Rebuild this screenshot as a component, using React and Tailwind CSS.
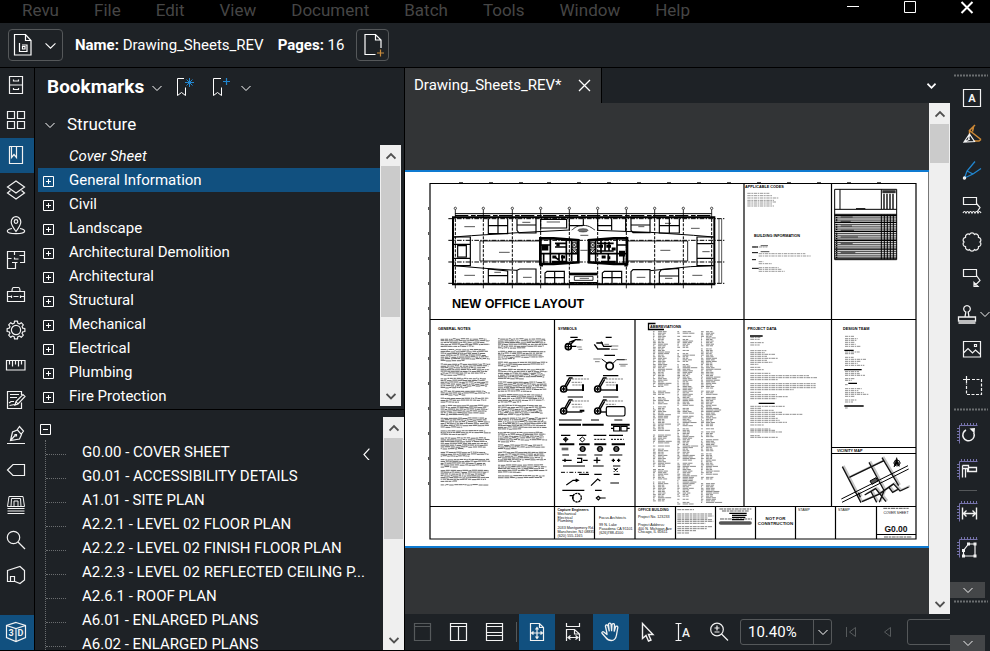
import React from "react";

/* ---------- shared helpers ---------- */

function Icon({ children, size = 24, className = "" }) {
  return (
    <svg
      width={size}
      height={size}
      viewBox="0 0 24 24"
      fill="none"
      stroke="currentColor"
      strokeWidth="1.2"
      aria-hidden="true"
      className={"shrink-0 " + className}
    >
      {children}
    </svg>
  );
}

function Chevron({ dir = "down", w = 10, strong = false, className = "" }) {
  const d = {
    down: "M0.5 1l4.5 4.5L9.5 1",
    up: "M0.5 5.5L5 1l4.5 4.5",
    left: "M7 -1.5L2.5 3.5L7 8.5",
  }[dir];
  return (
    <svg
      width={w}
      height={w}
      viewBox="0 -2 10 10"
      fill="none"
      stroke="currentColor"
      strokeWidth={strong ? 1.9 : 1}
      aria-hidden="true"
      className={"shrink-0 " + className}
    >
      <path d={d} />
    </svg>
  );
}

function polar(cx, cy, r, a) {
  return (cx + r * Math.cos(a)).toFixed(2) + " " + (cy + r * Math.sin(a)).toFixed(2);
}

function gearPath() {
  let d = "";
  for (let i = 0; i < 8; i++) {
    const a = (i * Math.PI) / 4;
    const pts = [
      [7, -0.26],
      [9, -0.17],
      [9, 0.17],
      [7, 0.26],
    ];
    pts.forEach(([r, o], k) => {
      d += (i === 0 && k === 0 ? "M" : "L") + polar(12, 12, r, a + o);
    });
  }
  return d + "Z";
}

function scallopPath() {
  let d = "M" + polar(12, 12, 8, 0);
  for (let i = 1; i <= 10; i++) {
    d += "A2.7 2.7 0 0 1 " + polar(12, 12, 8, (i * Math.PI) / 5);
  }
  return d + "Z";
}

function ScrollBar({ thumb, className = "" }) {
  return (
    <div className={"flex w-[21px] shrink-0 flex-col items-center bg-[#efefef] text-[#505050] " + className}>
      <button type="button" aria-label="Scroll up" className="flex h-[21px] w-full shrink-0 items-center justify-center">
        <Chevron dir="up" strong />
      </button>
      <div className="flex w-full flex-1 flex-col px-px">
        <div className={"bg-[#cbcbcb] " + thumb} />
      </div>
      <button type="button" aria-label="Scroll down" className="flex h-[21px] w-full shrink-0 items-center justify-center">
        <Chevron dir="down" strong />
      </button>
    </div>
  );
}

/* ---------- menu and toolbar ---------- */

const menus = ["Revu", "File", "Edit", "View", "Document", "Batch", "Tools", "Window", "Help"];

function MenuBar() {
  return (
    <header className="flex h-[23px] shrink-0 items-start justify-between bg-black">
      <nav className="flex gap-[35px] pl-[22px] text-[17px] leading-[21px] text-[#464646]">
        {menus.map((m) => (
          <button key={m} type="button">
            {m}
          </button>
        ))}
      </nav>
      <div className="flex gap-[30px] pr-[10px] text-white">
        <button type="button" aria-label="Minimize" className="flex w-[27px] justify-center">
          <svg width="14" height="15" fill="none" stroke="currentColor">
            <path d="M1 6.5h12" />
          </svg>
        </button>
        <button type="button" aria-label="Maximize" className="flex w-[27px] justify-center">
          <svg width="14" height="15" fill="none" stroke="currentColor">
            <path d="M1.5 1.5h11v11h-11z" />
          </svg>
        </button>
        <button type="button" aria-label="Close" className="flex w-[27px] justify-center">
          <svg width="14" height="15" fill="none" stroke="currentColor" strokeWidth="2">
            <path d="M1.5 2l11 11M12.5 2l-11 11" />
          </svg>
        </button>
      </div>
    </header>
  );
}

function ToolBar() {
  return (
    <div className="flex h-[45px] shrink-0 items-center border-b border-black pl-2 text-[15px] text-white">
      <button type="button" aria-label="Document" className="flex h-8 w-[55px] items-center justify-between rounded border border-[#55585a] pr-[6px] pl-[2px]">
        <Icon>
          <path d="M3.500 1.500h11l5.500 6v14.500h-16.500zM14.500 1.500v6h5.500" strokeWidth="1.200" />
          <path d="M8.500 10v8.500h7.500v-6.500h-5" strokeWidth="1.200" />
          <path d="M11.500 13.500h2.500v2.500h-2.500z" />
        </Icon>
        <Chevron w={11} />
      </button>
      <p className="ml-3">
        <strong className="font-bold">Name:</strong> Drawing_Sheets_REV
      </p>
      <p className="ml-[14px]">
        <strong className="font-bold">Pages:</strong> 16
      </p>
      <button type="button" aria-label="Add page" className="ml-3 flex h-8 w-[33px] items-center justify-center rounded border border-[#55585a]">
        <Icon>
          <path d="M14.500 21.500h-10.500v-20h10.500l5.500 5.500v8M14.500 1.500v5.500h5.500" strokeWidth="1.200" />
          <path d="M19.500 16.500v7M16 20h7" stroke="#c98b3b" />
        </Icon>
      </button>
    </div>
  );
}

/* ---------- left rail ---------- */

const railIcons = [
  ["File Access", <path key="a" d="M5.500 3.500h13v17h-13zM5.500 12h13M9.500 6.500v1.500h5v-1.500M9.500 15v1.500h5v-1.500" />],
  ["Thumbnails", <path key="a" d="M3.500 3.500h7v7h-7zM13.500 3.500h7v7h-7zM3.500 13.500h7v7h-7zM13.500 13.500h7v7h-7z" />],
  ["Bookmarks", <path key="a" d="M5.500 3.500h13v17h-13zM7.500 3.500v11l2.500-3 2.500 3v-11" />],
  ["Layers", <path key="a" d="M12 3l8.500 6-8.500 6-8.500-6zM6.500 12.500l-3 2.500 8.500 6 8.500-6-3-2.500" />],
  [
    "Places",
    <g key="a">
      <path d="M12 18.500c-3-4-4.800-6.500-4.800-9.500a4.800 5.300 0 0 1 9.600 0c0 3-1.800 5.500-4.800 9.500z" />
      <circle cx="12" cy="8.500" r="1.800" />
      <path d="M8 15.500c-3 .6-4.700 1.600-4.700 2.500 0 1.700 3.800 2.700 8.700 2.700s8.700-1 8.700-2.700c0-.9-1.700-1.900-4.700-2.500" />
    </g>,
  ],
  ["Spaces", <path key="a" d="M11.500 14.500v6h-8v-17h17v11h-4.500M13.500 14.500h-2M10.500 3.500v3.500M3.500 10.500h4M10.500 9.500v1.500h4M15.500 7.500h5M8 14.500h3.500" />],
  ["Tool Chest", <path key="a" d="M3.500 8.500h17v10h-17zM8 8.500c0-3 .5-4 1.500-4h5c1 0 1.500 1 1.500 4M3.500 13.500h4M9.500 13.500h5M16.500 13.500h4M7.500 12.500v2.500M16.500 12.500v2.500" />],
  [
    "Properties",
    <g key="a">
      <path d={gearPath()} strokeLinejoin="round" />
      <circle cx="12" cy="12" r="4.600" />
    </g>,
  ],
  ["Measurements", <path key="a" d="M2.500 7.500h18.500v9.500h-18.500zM5.500 7.500v4M8.500 7.500v6M11.500 7.500v4M14.500 7.500v6M17.500 7.500v4" />],
  ["Forms", <path key="a" d="M17.500 7v-3.500h-14v17h14v-6M6 6.500h9M6 9.500h7M5 15l2-1.500h3M5.500 17.500l5-1M11 17l1-3.500 7-7 2 2-7 7.500zM12 13.500l2 2.500" />],
  ["Signatures", <path key="a" d="M3 20.500h18M6.500 17.500l2-8.500 5-2 4 4.500-2 4.500zM13 7l2.500-3.500 4 4.500-2.500 3.500M6.500 17.500l4.500-5M11 11.500h1.500v1.500h-1.500z" />],
  ["Tags", <path key="a" d="M9 6.500h11.500v11h-11.500l-5.500-5.500z" />],
  ["Batch", <path key="a" d="M3.500 13.500l1.500-10h14l1.500 10zM7 13.500l.5-8h9l.5 8M10 13v-5h4v5M3.500 15.500h17M3.500 18h17M3.500 20.500h17" strokeWidth="1" />],
  [
    "Search",
    <g key="a">
      <circle cx="9.500" cy="9.500" r="6.200" />
      <path d="M14 14l7 7" />
    </g>,
  ],
  ["Sets", <path key="a" d="M3.500 7.500l12.500-4 4.500 4v9.500l-4.500 3.500-5-2h-7.500zM6.500 18v-4.500h4v5" />],
];

function LeftRail() {
  return (
    <nav className="flex w-[35px] shrink-0 flex-col border-r border-black text-[#f2f2f2]" aria-label="Panels">
      {railIcons.map(([label, art]) => (
        <button
          key={label}
          type="button"
          aria-label={label}
          className={"flex h-[35px] items-start pt-[5px] pl-1 " + (label === "Bookmarks" ? "bg-[#11507f]" : "")}
        >
          <Icon>{art}</Icon>
        </button>
      ))}
      <button type="button" aria-label="3D Model Tree" className="mt-auto flex h-[35px] items-start bg-[#11507f] pt-[5px] pl-1">
        <Icon>
          <path d="M12 2.500l9.500 3v12l-9.500 4-9.500-4v-12zM2.500 5.500l9.500 3 9.500-3M12 8.500v13" />
          <text x="4.500" y="16" fontSize="9" fontWeight="700" fill="currentColor" stroke="none">3</text>
          <text x="13.500" y="16" fontSize="9" fontWeight="700" fill="currentColor" stroke="none">D</text>
        </Icon>
      </button>
    </nav>
  );
}

/* ---------- bookmarks panel ---------- */

const sections = [
  "General Information",
  "Civil",
  "Landscape",
  "Architectural Demolition",
  "Architectural",
  "Structural",
  "Mechanical",
  "Electrical",
  "Plumbing",
  "Fire Protection",
];

const sheets = [
  "G0.00 - COVER SHEET",
  "G0.01 - ACCESSIBILITY DETAILS",
  "A1.01 - SITE PLAN",
  "A2.2.1 - LEVEL 02 FLOOR PLAN",
  "A2.2.2 - LEVEL 02 FINISH FLOOR PLAN",
  "A2.2.3 - LEVEL 02 REFLECTED CEILING P...",
  "A2.6.1 - ROOF PLAN",
  "A6.01 - ENLARGED PLANS",
  "A6.02 - ENLARGED PLANS",
];

function TreeBox({ open = false }) {
  return (
    <svg width="11" height="11" fill="none" stroke="white" className="shrink-0" aria-hidden="true">
      <path d={open ? "M.5.5h10v10H.5zM3 5.500h5" : "M.5.5h10v10H.5zM3 5.500h5M5.500 3v5"} />
    </svg>
  );
}

function BookmarksPanel() {
  return (
    <aside className="flex w-[370px] shrink-0 flex-col border-r border-black text-white">
      <div className="flex h-[39px] shrink-0 items-center pl-3">
        <h2 className="text-[19px] font-bold">Bookmarks</h2>
        <button type="button" aria-label="Panel menu" className="ml-2">
          <Chevron />
        </button>
        <button type="button" aria-label="Create bookmarks" className="ml-[11px]">
          <Icon>
            <path d="M11 2.500h-6.500v17l4-3 4 3v-8" strokeWidth="1" />
            <path d="M16.500 2v9M12 6.500h9M13.500 3.500l6 6M19.500 3.500l-6 6" stroke="#2186cf" strokeWidth="1" />
          </Icon>
        </button>
        <button type="button" aria-label="Add bookmark" className="ml-3">
          <Icon>
            <path d="M12 2.500h-7.500v17l4-3 4 3v-8" strokeWidth="1" />
            <path d="M17.500 2v7M14 5.500h7" stroke="#2186cf" />
          </Icon>
        </button>
        <button type="button" aria-label="More" className="ml-2">
          <Chevron />
        </button>
      </div>
      <button type="button" className="flex h-9 shrink-0 items-center gap-3 pl-[10px] text-left text-[17px]">
        <Chevron />
        Structure
      </button>
      <div className="mt-px flex h-[266px] shrink-0 border-b border-black pr-[3px] pb-[3px]">
        <ul className="flex-1 overflow-hidden pl-[3px] text-[15px] leading-[24px]">
          <li className="pl-[31px] italic">
            <a href="#cover">Cover Sheet</a>
          </li>
          {sections.map((s, i) => (
            <li key={s} className={"flex items-center gap-[15px] pl-[5px] " + (i === 0 ? "bg-[#11507f]" : "")}>
              <button type="button" aria-label={"Expand " + s} className="pt-[2px]">
                <TreeBox />
              </button>
              <a href="#section">{s}</a>
            </li>
          ))}
        </ul>
        <ScrollBar thumb="h-[151px]" className="mt-px" />
      </div>
      <div className="flex min-h-0 flex-1 pt-[7px]">
        <div className="flex min-w-0 flex-1 flex-col overflow-hidden">
          <button type="button" aria-label="Collapse" className="flex h-[23px] shrink-0 items-end pb-[5px] pl-[5px]">
            <TreeBox open />
          </button>
          <ul className="ml-[10px] border-l border-dotted border-[#6a6d6f] text-[15px] leading-[24px]">
            {sheets.map((s, i) => (
              <li key={s} className="flex items-center whitespace-nowrap">
                <span className="mt-1 w-[20px] shrink-0 border-t border-dotted border-[#6a6d6f]" />
                <a href="#sheet" className="ml-4 w-[287px]">
                  {s}
                </a>
                {i === 0 && <Chevron dir="left" w={12} className="-ml-2 mt-1" />}
              </li>
            ))}
          </ul>
        </div>
        <ScrollBar thumb="h-[101px]" />
      </div>
    </aside>
  );
}

/* ---------- drawing sheet ---------- */

// Deterministic run of short dashes standing for body copy too small to read.
function greek(seed, x, w, y0, y1, step) {
  let s = seed;
  const rnd = () => {
    s = (s * 1103515245 + 12345) % 2147483648;
    return s / 2147483648;
  };
  let d = "";
  let left = 3 + Math.floor(rnd() * 4);
  for (let y = y0; y < y1; y += step) {
    left -= 1;
    if (left < 0) {
      left = 3 + Math.floor(rnd() * 5);
      continue;
    }
    const end = x + w * (left === 0 ? 0.3 + rnd() * 0.4 : 0.88 + rnd() * 0.12);
    let cx = x;
    while (cx < end) {
      const len = Math.min(3 + rnd() * 14, end - cx);
      const lift = (rnd() - 0.5) * 1.8;
      d += "M" + cx.toFixed(1) + " " + (y + lift).toFixed(1) + "h" + len.toFixed(1);
      cx += len + 0.6 + rnd() * 1.8;
    }
  }
  return d;
}

function abbreviations(seed, x, tx, w, y0, y1) {
  let s = seed;
  const rnd = () => {
    s = (s * 1103515245 + 12345) % 2147483648;
    return s / 2147483648;
  };
  let d = "";
  for (let y = y0; y < y1; y += 4.7) {
    if (rnd() < 0.1) continue;
    d += "M" + x + " " + y.toFixed(1) + "h" + (3 + rnd() * 6).toFixed(1);
    const len = w * (0.3 + rnd() * rnd() * 0.7);
    d += "M" + tx + " " + y.toFixed(1) + "h" + (len * 0.5).toFixed(1) + "m2 0h" + (len * 0.45).toFixed(1);
  }
  return d;
}

// Short left-aligned lines: [y, width, indent] rows.
function lines(x, rows) {
  return rows.map(([y, w, o = 0]) => "M" + (x + o) + " " + y + "h" + w).join("");
}

const cols = [91, 175, 262, 347, 433, 518, 604, 689, 775, 860];

function OfficePlan() {
  return (
    <g transform="translate(425 175) scale(.33333)" fill="none" stroke="#000">
      <path d="M84 127h784v201H84z" strokeWidth="6" />
      <path d="M90 116h770" strokeWidth="3" />
      <path d="M90 122h770" strokeWidth="3.500" strokeDasharray="40 8 14 4" />
      {cols.map((x) => (
        <g key={x}>
          <path d={"M" + x + " 104v26M" + x + " 328v12"} strokeWidth="2.500" />
          <path d={"M" + x + " 132v196"} strokeWidth="3" strokeDasharray="9 4" />
          <circle cx={x} cy="100" r="3.500" strokeWidth="2" />
        </g>
      ))}
      <path d="M70 131h830M70 196h830M70 261h830M70 325h830" strokeWidth="3" strokeDasharray="14 4 4 4" />
      <path d="M882 131v194M890 131v194" strokeWidth="2" />
      {/* perimeter rooms */}
      <path
        strokeWidth="3.500"
        d="M190 130v46h58v-46M219 130v46M190 152h58M276 130v36l6 8h51v-44M276 150h57M347 133h78v26h-78zM433 130v34M475 130v22M518 130v36M560 130v36M433 152h40M518 152h42M602 130v38M618 130v36l6 7h51v-43M618 150h57M703 130v44h60v-44M733 130v44M703 152h60"
      />
      <path strokeWidth="3" d="M86 186l54-4 140-9 155-8M86 272l106 9 84 5M866 186l-60-5-130-9-160-6M866 272l-70 3-120 12" />
      <path strokeWidth="3.500" d="M86 186h50v86h-50M86 208h50M86 250h50M98 212h26v34h-26zM866 186h-50v86h50M816 206h50M816 250h50" />
      <path
        strokeWidth="3.500"
        d="M190 326v-44l58 6v38M190 302h58M276 326v-40l8-4h49v44M360 326v-32l6-5h52v37M389 289v37M360 308h58M532 326v-32l6-5h52v37M561 289v37M532 308h58M618 326v-36l6-6h51v42M703 326v-34l6-8 52-4v46M703 303h58"
      />
      <path strokeWidth="2.500" d="M165 198h182v60h-182zM606 198h182v60h-182zM448 304h56v12h-56zM440 165c6-2 12-14 34-14s30 12 36 14" />
      <path strokeWidth="8" d="M432 297h86" />
      <path strokeWidth="4" d="M432 323h86" />
      <ellipse cx="474" cy="166" rx="15" ry="5" fill="#777" strokeWidth="1.500" />
      <path
        strokeWidth="2"
        d="M118 155h32M222 232h32M118 301h32M292 142h24M365 141h40M706 226h30M798 160h26M802 301h30M832 230h22M294 307h26M635 307h26M208 292h20M466 181h24M466 226h22M640 155h18M720 145h18M720 310h22M464 310h28"
      />
      {/* service cores */}
      <path strokeWidth="8" d="M346 190h40l74 6v66l-74 5h-40zM606 190h-40l-74 6v66l74 5h40z" />
      <path
        strokeWidth="5"
        d="M346 210h30M346 236h114M376 190v76M402 236v30M424 192v72M440 198v60M390 205h34M390 216h34M356 236v28M412 240v24M388 245l16 12M606 210h-30M606 236h-114M576 190v76M550 236v30M528 192v44M512 198v66M516 205h50M516 228h50M540 200v28M552 200v28M596 236v28"
      />
      <path strokeWidth="9" d="M350 214h20M350 222h20M394 210h10M382 246h12M408 246h12M582 232h18M582 240h18M520 214h14M544 214h14M560 222h12M530 246h12M548 248h8M344 270h10M598 270h10M380 262h44M528 262h44" />
      <path strokeWidth="2.500" d="M441 203h14v14h-14zM441 222h14v14h-14zM441 203l14 14M455 203l-14 14M441 222l14 14M455 222l-14 14M496 203h14v14h-14zM496 222h14v14h-14zM496 203l14 14M510 203l-14 14M496 222l14 14M510 222l-14 14" />
    </g>
  );
}

function Symbols() {
  return (
    <g transform="translate(425 315) scale(.33333)" fill="none" stroke="#000">
      <path strokeWidth="3.500" d="M436 67h22M542 67h18M538 121h32M424 182h50M534 182h46M428 246h46M534 246h46M402 315h68M498 315h24M568 315h24M408 361h28M456 361h28M506 361h38M552 361h42M412 420h20M458 420h26M508 420h24M554 420h38M414 453h66M504 453h32M564 453h22M462 478h30M508 478h22M566 478h18M412 526h66M510 526h20" />
      <path strokeWidth="6" d="M402 329h66M472 329h64M558 329h56M404 388h44M462 388h32M508 388h36M560 388h40" />
      <circle cx="430" cy="95" r="9" strokeWidth="5" />
      <path strokeWidth="4" d="M421 95h20M430 86v20M437 88l14-14h16M432 82l16-6M440 94h14M508 88l10 14h36M528 80l8 14h24M514 84h20" />
      <path strokeWidth="2" stroke="#444" d="M456 75h18M456 96h14M460 103h12M538 88h14M558 93h22M558 103h20" />
      <circle cx="554" cy="153" r="11" strokeWidth="5" />
      <path strokeWidth="3" d="M546 144l-16-12M563 146l12-12h24" />
      <path strokeWidth="2" stroke="#444" d="M505 132h22M510 140h14M582 134h24M582 148h26M586 153h16" />
      {[
        [416, 222],
        [518, 222],
        [416, 288],
        [518, 288],
      ].map(([x, y]) => (
        <g key={x + "-" + y}>
          <circle cx={x} cy={y} r="9" strokeWidth="5" />
          <path d={"M" + (x - 6) + " " + y + "h12M" + x + " " + (y - 6) + "v12"} strokeWidth="4" />
          <path d={"M" + (x + 3) + " " + (y - 8) + "l14-25h10M" + (x + 7) + " " + (y - 5) + "l14-24"} strokeWidth="4" />
          <path d={"M" + (x + 10) + " " + (y + 3) + "h46"} strokeWidth="4" />
          <path d={"M" + (x + 24) + " " + (y - 30) + "h54M" + (x + 24) + " " + (y - 20) + "h30M" + (x + 26) + " " + (y - 12) + "h30"} strokeWidth="2" strokeDasharray="7 2" stroke="#444" />
        </g>
      ))}
      <path strokeWidth="6" d="M474 208v20M576 208v20M464 287h14" />
      <rect x="544" y="275" width="56" height="28" rx="5" strokeWidth="3.500" fill="#fff" />
      <path strokeWidth="3.500" d="M566 334h18v14h-18zM588 334h18v14h-18zM566 340h-8M606 340h8" />
      <path strokeWidth="3" d="M422 366v16M414 373h16M472 366l8 7-8 8-8-8z" />
      <circle cx="422" cy="373" r="5" strokeWidth="3" />
      <path strokeWidth="3" strokeDasharray="6 3" d="M508 373h36M558 373h38" />
      <path strokeWidth="8" stroke="#666" d="M410 402h20" />
      <g fill="#999" strokeWidth="4">
        <circle cx="473" cy="402" r="7" />
        <circle cx="525" cy="402" r="7" />
        <circle cx="574" cy="402" r="7" />
      </g>
      <path strokeWidth="2.500" d="M463 402h20M515 402h20M564 402h20" />
      <path strokeWidth="4" d="M412 436h28M420 431v10M456 430h14v12h-14M474 436h14M506 436h20M516 427v18M560 436h10M565 431v10M576 436h10M581 431v10" />
      <path strokeWidth="3" strokeDasharray="12 5 3 5" d="M408 472h82" />
      <path strokeWidth="3.500" d="M566 460l12 10M578 460l-12 10M424 510l20-14h14M452 492l8 4-8 4M498 512l20-20 8 6M556 504h26" />
      <circle cx="456" cy="548" r="13" strokeWidth="4" strokeDasharray="7 2" />
      <path strokeWidth="3.500" d="M434 542h10v12M514 549l6-5 6 5-6 6zM526 549h16" />
    </g>
  );
}

function Street({ d }) {
  return (
    <g>
      <path d={d} stroke="#c4c4c4" strokeWidth="6" transform="translate(4 -3)" />
      <path d={d} stroke="#111" strokeWidth="4" />
    </g>
  );
}

function DrawingSheet() {
  const notes = [greek(7, 47, 150, 72, 510, 5.4), greek(23, 219, 148, 72, 488, 5.4)];
  const abbr = [
    abbreviations(5, 69, 84, 50, 50, 560),
    abbreviations(11, 142, 158, 50, 50, 570),
    abbreviations(31, 213, 228, 52, 50, 565),
  ];
  return (
    <svg
      viewBox="405 172 524 374"
      className="block w-full bg-white"
      role="img"
      aria-label="Cover sheet of the drawing set"
      fontFamily='"Liberation Sans", Arial, sans-serif'
    >
      {/* sheet frame and title block */}
      <g stroke="#000" fill="none" strokeWidth="1.200">
        <path d="M430 183.500h486v355.500H430zM430 319.500h486M430 506.500h486M744 183.500v323M831.500 183.500v323M554.500 319.500v219.500M635 319.500v219.500M831.500 447.500h84.500M831.500 453.500h84.500" />
        <path d="M594.500 506.500v32.500M675.500 506.500v32.500M715.500 506.500v32.500M755.500 506.500v32.500M795.500 506.500v32.500M835.500 506.500v32.500M876.500 506.500v32.500M876.500 534.500h39.500" />
        <path
          strokeWidth="1"
          stroke="#555"
          d="M459 182.500h4M489 182.500h4M519 182.500h4M547 182.500h4M577 182.500h4M607 182.500h4M637 182.500h4M667 182.500h4M697 182.500h4M727 182.500h4M757 182.500h4M787 182.500h4M817 182.500h4M847 182.500h4M877 182.500h4M428.500 207v3M428.500 232v3M428.500 257v3M428.500 282v3M428.500 307v3M428.500 332v3M428.500 357v3M428.500 382v3M428.500 407v3M428.500 432v3M428.500 457v3M428.500 482v3"
        />
      </g>
      <path d="M928.500 172v374" stroke="#777" />

      <OfficePlan />
      <text x="452" y="307.500" fontSize="12.500" fontWeight="700">NEW OFFICE LAYOUT</text>

      <g fontSize="3.800" fontWeight="700">
        <text x="745" y="188">APPLICABLE CODES</text>
        <text x="754" y="237">BUILDING INFORMATION</text>
        <text x="438" y="330">GENERAL NOTES</text>
        <text x="558" y="330">SYMBOLS</text>
        <text x="650" y="328">ABBREVIATIONS</text>
        <text x="747.500" y="330">PROJECT DATA</text>
        <text x="843" y="330">DESIGN TEAM</text>
        <text x="837" y="452">VICINITY MAP</text>
      </g>
      <path d="M664 329.500h-15.500v-6h7" stroke="#000" fill="none" strokeWidth="1.300" />

      {/* codes and building information */}
      <g transform="translate(740 175) scale(.33333)" fill="none" stroke="#555">
        <path strokeWidth="1.800" d={lines(22, [[55, 66], [62, 76], [69, 94], [76, 80], [81, 86], [87, 74], [93, 80], [216, 44, 16], [236, 140, 34], [243, 156, 34], [260, 14, 34], [266, 40, 34], [278, 60, 34], [283, 70, 34], [289, 78, 34]])} strokeDasharray="10 2 5 2" />
        <path stroke="#000" strokeWidth="3" d="M36 216h18M36 233h18M36 254h12M36 280h20" />
        <path stroke="#000" strokeWidth="2" d="M62 212h22M62 230h26" />
      </g>

      {/* sheet index */}
      <g transform="translate(740 175) scale(.33333)" fill="none" stroke="#000">
        <rect x="284" y="119" width="186" height="134" fill="#d4d4d4" stroke="none" />
        <path d="M284 43h186v211H284zM300 43v60M284 103h186M284 118h186M424 43v60" strokeWidth="3" />
        <path d="M427 50h40" strokeWidth="9" stroke="#333" />
        <path d="M432 56v46M441 56v46M450 56v46M459 56v46" strokeWidth="4" />
        <path d="M348 101h28" strokeWidth="3" />
        {Array.from({ length: 20 }, (_, i) => (
          <path
            key={i}
            d={"M284 " + (122 + i * 6.700) + "h186"}
            strokeWidth={i % 4 === 3 || i === 0 ? 4 : 2}
          />
        ))}
        <path d="M290 119v134" strokeWidth="4" strokeDasharray="4 3" />
        <path d="M302 126h36M302 139h30M302 153h34M302 166h40M302 186h52M302 206h36M302 233h44" strokeWidth="2" />
        <path d="M424 119v134M433 119v134M442 119v134M451 119v134M460 119v134" strokeWidth="3" />
      </g>

      {/* general notes */}
      <g transform="translate(425 315) scale(.33333)" stroke="#4c4c4c" strokeWidth="2.400">
        {notes.map((d, i) => (
          <path key={i} d={d} />
        ))}
      </g>

      <Symbols />

      {/* abbreviations, project data, design team */}
      <g transform="translate(630 315) scale(.33333)" fill="none" stroke="#666" strokeWidth="2.200">
        {abbr.map((d, i) => (
          <path key={i} d={d} />
        ))}
        <path
          strokeDasharray="11 2 6 2"
          d={lines(361, [[67, 30], [73, 28], [83, 42], [90, 28], [107, 48], [113, 44], [118, 76], [124, 50], [130, 84], [136, 50], [142, 66], [148, 24], [157, 30], [164, 40], [175, 60], [182, 176], [188, 200], [194, 84], [206, 196], [212, 196], [218, 196], [224, 130], [232, 34], [239, 80], [245, 112], [251, 78], [274, 104], [280, 34], [286, 70], [292, 96], [298, 156], [304, 76], [310, 84], [316, 88], [322, 110], [330, 42], [342, 60], [346, 74], [351, 96], [362, 28], [367, 84]])}
        />
        <path
          strokeDasharray="9 2 5 2"
          d={lines(645, [[64, 28], [71, 38], [76, 34], [82, 30], [88, 32], [94, 48], [111, 44], [116, 28], [127, 26], [133, 64], [139, 48], [145, 38], [151, 58], [170, 42], [176, 44], [181, 60], [191, 30], [196, 20], [209, 8], [221, 50], [227, 40], [233, 56], [238, 70], [244, 30], [255, 36], [261, 24], [279, 8]])}
        />
        <path stroke="#000" strokeWidth="4" d="M360 63h38M386 265h48M643 106h28M643 164h52M655 205h26M643 273h58" />
      </g>

      {/* vicinity map */}
      <g transform="translate(630 315) scale(.33333)" fill="none">
        <Street d="M637 455l56 108M658 487l104-50M717 442l46 86M756 428l50 84M685 533l6 14M696 560l50-22 46-32M792 508l18 20 26-12M776 516l12 16 18-10M738 522l30 38M722 528l18 34M704 540l34-20M762 528l-14 34" />
        <path d="M636 562l200-100M634 552l200-100" stroke="#000" strokeWidth="3" />
        <path d="M720 498l18-10 6 10-18 10z" fill="#555" stroke="#000" strokeWidth="3" />
        <circle cx="801" cy="444" r="9" stroke="#000" strokeWidth="2.500" />
        <path d="M800 428l8 26-8-6-8 8zM790 444h22" fill="#000" stroke="#000" strokeWidth="2" />
      </g>

      {/* title block copy */}
      <g fontSize="3.700" fill="#111">
        <text x="557.500" y="511" fontSize="3.500" fontWeight="700">Capture Engineers</text>
        <text x="638" y="511" fontSize="3.500" fontWeight="700">OFFICE BUILDING</text>
        <text x="557.500" y="515">Mechanical</text>
        <text x="557.500" y="518.500">Electrical</text>
        <text x="557.500" y="522">Plumbing</text>
        <text x="557.500" y="529">2033 Montgomery Rd.</text>
        <text x="557.500" y="533">Manchester, NJ 08835</text>
        <text x="557.500" y="536.500">(620) 555-1165</text>
        <text x="599" y="519">Focus Architects</text>
        <text x="599" y="526">99 N. Lake</text>
        <text x="599" y="530">Pasadena CA 91101</text>
        <text x="599" y="534">(626)788-4100</text>
        <text x="638" y="518">Project No. 123233</text>
        <text x="638" y="525.500">Project Address:</text>
        <text x="638" y="529.500">400 N. Michigan Ave</text>
        <text x="638" y="533">Chicago, IL 60611</text>
        <text x="798" y="510.500" fontSize="3.500">STAMP</text>
        <text x="838" y="510.500" fontSize="3.500">STAMP</text>
        <text x="896" y="514" fontSize="3.500" textAnchor="middle">COVER SHEET</text>
        <text x="775.500" y="520" fontSize="4.400" fontWeight="700" textAnchor="middle">NOT FOR</text>
        <text x="775.500" y="525" fontSize="4.400" fontWeight="700" textAnchor="middle">CONSTRUCTION</text>
        <text x="896" y="531.500" fontSize="8.500" fontWeight="700" textAnchor="middle">G0.00</text>
      </g>
      <g transform="translate(630 315) scale(.33333)" fill="none" stroke="#666" strokeWidth="2.400" strokeDasharray="12 2 7 2">
        <path d={lines(142, [[584, 50], [597, 106], [603, 108], [609, 90], [614, 104], [619, 108], [625, 84], [635, 104], [641, 88], [647, 56], [654, 36]])} />
        <path d="M268 582h96M276 588h80M270 612h96M760 580h76M762 666h84" stroke="#333" />
        <path d="M298 595h52M306 601h44M306 607h40M306 614h36" stroke="#000" strokeWidth="4" strokeDasharray="none" />
        <path d="M272 624h88" stroke="#555" strokeWidth="11" strokeDasharray="none" strokeLinecap="round" />
      </g>
    </svg>
  );
}

/* ---------- status bar ---------- */

function StatusButton({ label, active = false, dim = false, children }) {
  return (
    <button
      type="button"
      aria-label={label}
      className={
        "flex h-full w-9 shrink-0 items-center justify-center " +
        (active ? "bg-[#11507f] " : "") +
        (dim ? "text-[#565a5c]" : "text-[#f2f2f2]")
      }
    >
      <Icon>{children}</Icon>
    </button>
  );
}

function StatusBar() {
  return (
    <div className="flex h-[36px] shrink-0 items-center overflow-hidden">
      <StatusButton label="Single page" dim>
        <path d="M3.500 3.500h16v17h-16zM3.500 6.500h16" />
      </StatusButton>
      <StatusButton label="Split vertical">
        <path d="M3.500 3.500h16v17h-16zM3.500 6.500h16M11.500 6.500v14" />
      </StatusButton>
      <StatusButton label="Split horizontal">
        <path d="M3.500 3.500h16v17h-16zM3.500 6.500h16M3.500 12.500h16M3.500 15.500h16" />
      </StatusButton>
      <div className="mr-[2px] ml-[3px] h-5 w-px shrink-0 bg-[#55585a]" />
      <StatusButton label="Fit page" active>
        <path d="M5.500 3.500h9l4 4v13h-13zM14.500 3.500v4h4" />
        <path d="M12 8v10M7 13h10M10.500 9.500l1.500-2 1.500 2M10.500 16.500l1.500 2 1.500-2M8.500 11.500l-2 1.500 2 1.500M15.500 11.500l2 1.500-2 1.500" />
      </StatusButton>
      <StatusButton label="Fit width">
        <path d="M5.500 3v3.500h13v-3.500M5.500 21v-11.500h8l5 4.500v7M13.500 9.500v4.500h5M8 17.500h8M9.500 15.500l-2.500 2 2.500 2M14.500 15.500l2.500 2-2.500 2" />
      </StatusButton>
      <div className="w-[2px] shrink-0" />
      <StatusButton label="Pan" active>
        <path
          strokeLinejoin="round"
          strokeLinecap="round"
          strokeWidth="1.300"
          d="M8 13.500l-1.500-7a1.200 1.200 0 0 1 2.400-.6l1.300 5M10.200 10.900l-.7-6.400a1.200 1.200 0 0 1 2.500-.3l.6 6.500M12.600 10.700l.4-6a1.200 1.200 0 0 1 2.500.2l-.3 6.300M15.200 11.200l1.300-4.200a1.200 1.200 0 0 1 2.300.7l-1.300 7.300c-.5 3-2 5.500-5.200 5.500-3 0-4.200-1.200-5.500-3l-3.800-4.300c-.6-1 .8-2 1.800-1.200l3.200 2.500"
        />
      </StatusButton>
      <StatusButton label="Select">
        <path d="M7.500 3.500v15l3.500-3 2.500 5.500 2.500-1-2.500-5.500h4.500z" strokeWidth="1.400" />
      </StatusButton>
      <StatusButton label="Select text">
        <path d="M4.500 3.500h6M4.500 20.500h6M7.500 3.500v17" />
        <text x="11" y="16.500" fontSize="12" fontWeight="500" fill="currentColor" stroke="none">A</text>
      </StatusButton>
      <StatusButton label="Zoom">
        <circle cx="10" cy="9.500" r="6.300" />
        <path d="M14.500 14l6.500 6.500M10 5.500v5M7.500 8h5M7.500 12h5" />
      </StatusButton>
      <div className="relative ml-[3px] h-[26px] w-[92px] shrink-0">
        <select
          aria-label="Zoom level"
          defaultValue="10.40%"
          className="h-full w-full appearance-none rounded-[3px] border border-[#55585a] bg-transparent pl-[7px] text-[15px] leading-[22px] text-white"
        >
          <option>10.40%</option>
        </select>
        <span className="pointer-events-none absolute inset-y-px right-px flex w-[18px] items-center justify-center border-l border-[#55585a] text-white">
          <Chevron w={10} />
        </span>
      </div>
      <button type="button" aria-label="First page" className="ml-[13px] text-[#565a5c]">
        <svg width="12" height="12" fill="none" stroke="currentColor">
          <path d="M1.500 1v10M10.500 1.500v9l-6-4.500z" />
        </svg>
      </button>
      <button type="button" aria-label="Previous page" className="ml-6 text-[#565a5c]">
        <svg width="12" height="12" fill="none" stroke="currentColor">
          <path d="M9.500 1.500v9l-6-4.500z" />
        </svg>
      </button>
      <input
        aria-label="Page"
        className="ml-[14px] h-[26px] w-20 shrink-0 rounded-[3px] border border-[#55585a] bg-transparent text-white"
      />
    </div>
  );
}

/* ---------- right rail ---------- */

function Grip() {
  return (
    <svg width="34" height="3" className="ml-1 shrink-0" aria-hidden="true">
      <path d="M0 1.500h34" stroke="#6b6e70" strokeWidth="2" strokeDasharray="2 1" />
    </svg>
  );
}

const markupTools = [
  [
    "Text box",
    <g key="a">
      <path d="M3.500 3.500h17v17h-17z" />
      <text x="12" y="16" fontSize="11" fontWeight="700" textAnchor="middle" fill="currentColor" stroke="none">A</text>
    </g>,
  ],
  [
    "Highlight",
    <g key="a">
      <path d="M15 3l-5.500 5.500 11.500 9M9.500 8.500v4M11.500 3.500M13.500 5l-1 4.500M14 19h5l2-1.500" stroke="#cf8a36" strokeWidth="1.500" />
      <path d="M4 20l5.500-8 5 7.500zM9.500 13l-1 4.500M4 20l6-3" />
    </g>,
  ],
  [
    "Pen",
    <g key="a">
      <path d="M15 3.500l-8 9.500-2.500 7M21 10.500l-8 5.500-8.500 4M7 13l6 3" stroke="#2186cf" strokeWidth="1.300" />
      <circle cx="4.500" cy="20" r="1.100" fill="currentColor" />
    </g>,
  ],
  ["Typewriter", <path key="a" d="M3.500 3.500h13v7h-13zM16.500 9.500l3.500 4-3 4.500M3 19q1.500-3 3 0q1.500-3 3 0q1.500-3 3 0q1.500-3 3 0q1.500-3 3 0q1.500-3 3 0" />],
  ["Cloud", <path key="a" d={scallopPath()} />],
  ["Callout", <path key="a" d="M3.500 3.500h13v7h-13zM16.500 9.500l3.500 5-5 5M14 16.500v4h4z" />],
  [
    "Stamp",
    <path key="a" strokeWidth="1.300" d="M3.500 15h17v4h-17zM3.500 21h17M10 15l.8-5a3.300 3.300 0 1 1 2.400 0l.8 5" />,
  ],
  ["Image", <path key="a" d="M3.500 3.500h17v15.500h-17zM3.500 15l4.500-4.500 4.500 4.500 3-3 5 4.500M14.500 6.500h2v2h-2z" />],
  [
    "Snapshot",
    <g key="a">
      <path d="M6.500 2v7M3 5.500h7" />
      <path d="M12 5.500h9.500v15h-15v-11" strokeDasharray="3 1.500" />
    </g>,
  ],
];

const rulerPath = "M4.500 21.500v-18h18M6.500 3.500v-2.500M9.500 3.500v-2.500M12.500 3.500v-2.500M15.500 3.500v-2.500M18.500 3.500v-2.500M21.500 3.500v-2.500M4.500 6.500h-2.500M4.500 9.500h-2.500M4.500 12.500h-2.500M4.500 15.500h-2.500M4.500 18.500h-2.500";

const measureTools = [
  [
    "Calibrate",
    <g key="a">
      <path d="M11 8a5.700 5.700 0 1 0 7.600 2.500" strokeWidth="1.500" />
      <path d="M14.500 6.500l5.500-.5-.5 5.500z" fill="currentColor" stroke="none" />
    </g>,
  ],
  ["Count", <path key="a" d="M7.500 7.500h6v2h8v4h-9v-3h-2v9M7.500 19.500v-12M7.500 10.500h3M13.500 9.500v4" strokeWidth="1.300" />],
  ["Length", <path key="a" d="M7.500 7.500v12M21.500 7.500v12M8 13.500h13M11.500 10.500l-3 3 3 3M17.500 10.500l3 3-3 3" strokeWidth="1.400" />],
  [
    "Area",
    <g key="a">
      <path d="M8.500 20v-5.500l5-6.500h6.500v12z" />
      <path d="M7 18.500h3v3h-3zM18.500 18.500h3v3h-3zM18.500 6.500h3v3h-3zM12 6.500h3v3h-3zM7 13h3v3h-3z" fill="currentColor" stroke="none" />
    </g>,
  ],
];

function ToolButton({ label, children, ruler = false }) {
  const pos = ruler || label === "Stamp" ? "pl-[5px]" : "pl-[10px]";
  return (
    <button type="button" aria-label={label} className={"flex h-9 shrink-0 items-center " + pos}>
      <Icon>
        {ruler && <path d={rulerPath} stroke="#7673ab" strokeWidth="1" />}
        {children}
      </Icon>
      {label === "Stamp" && <Chevron w={10} className="ml-px" />}
    </button>
  );
}

function More() {
  return (
    <button type="button" aria-label="More tools" className="flex h-4 w-[35px] shrink-0 items-center justify-center bg-[#444648]">
      <Chevron w={10} />
    </button>
  );
}

function RightRail() {
  return (
    <nav className="flex w-10 shrink-0 flex-col overflow-hidden pt-[6px] text-[#f2f2f2]" aria-label="Tools">
      <Grip />
      <div className="mt-[3px] flex shrink-0 flex-col">
        {markupTools.map(([label, art]) => (
          <ToolButton key={label} label={label}>
            {art}
          </ToolButton>
        ))}
      </div>
      <div className="mt-[4px] mb-[5px] flex shrink-0">
        <Grip />
      </div>
      {measureTools.map(([label, art]) => (
        <React.Fragment key={label}>
          {label === "Length" && <hr className="mt-[2px] mb-[3px] ml-[9px] w-[18px] border-[#55585a]" />}
          <ToolButton label={label} ruler>
            {art}
          </ToolButton>
        </React.Fragment>
      ))}
      <div className="mt-auto mb-[2px] flex shrink-0">
        <More />
      </div>
      <Grip />
      <div className="mt-[32px] flex shrink-0">
        <More />
      </div>
    </nav>
  );
}

/* ---------- document area ---------- */

function DocumentArea() {
  return (
    <main className="flex min-w-0 flex-1 flex-col">
      <div className="flex h-[35px] shrink-0 items-stretch justify-between">
        <div className="flex items-center gap-[17px] border-r border-black bg-[#323436] pr-[10px] pl-[9px] text-[15px] text-white">
          <span>Drawing_Sheets_REV*</span>
          <button type="button" aria-label="Close tab">
            <svg width="13" height="13" fill="none" stroke="currentColor" strokeWidth="1.300">
              <path d="M1 1l11 11M12 1L1 12" />
            </svg>
          </button>
        </div>
        <button type="button" aria-label="All tabs" className="mr-[14px] text-white">
          <Chevron w={9} strong />
        </button>
      </div>
      <div className="flex min-h-0 flex-1">
        <div className="flex min-w-0 flex-1 flex-col justify-center overflow-hidden bg-[#323436]">
          <div className="border-y-2 border-[#0e7ad1]">
            <DrawingSheet />
          </div>
        </div>
        <ScrollBar thumb="h-[39px]" />
      </div>
      <StatusBar />
    </main>
  );
}

export default function App() {
  return (
    <div className="flex h-screen flex-col overflow-hidden bg-[#1e2226] font-['Roboto',sans-serif]">
      <MenuBar />
      <ToolBar />
      <div className="flex min-h-0 flex-1">
        <div className="flex min-w-0 flex-1 border-b border-black">
          <LeftRail />
          <BookmarksPanel />
          <DocumentArea />
        </div>
        <RightRail />
      </div>
    </div>
  );
}
